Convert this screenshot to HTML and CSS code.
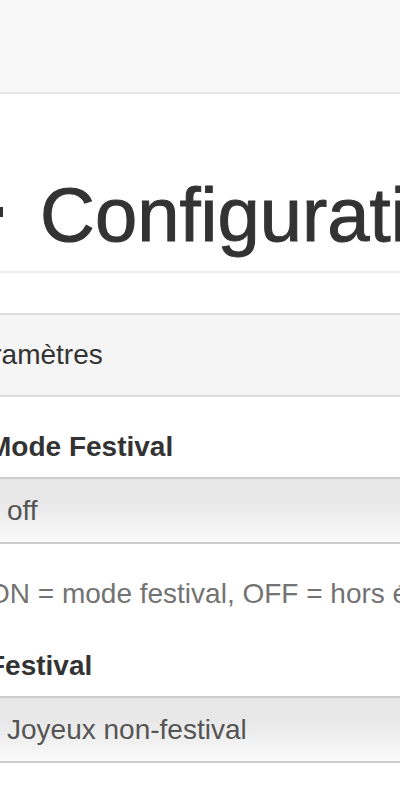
FILE: index.html
```html
<!DOCTYPE html>
<html lang="fr">
<head>
    <meta charset="UTF-8">
    <meta name="viewport" content="width=device-width, initial-scale=1.0">
    <title>Configuration</title>
    <link rel="stylesheet" href="styles.css">
</head>
<body>
    <nav class="navbar"></nav>

    <div class="container">
        <div class="page-header">
            <h1>
                <svg class="icon" viewBox="0 0 56 56" aria-hidden="true">
                    <path fill="#333" d="M23 0h10v8l5 2 6-6 7 7-6 6 2 5h9v10h-9l-2 5 6 6-7 7-6-6-5 2v8H23v-8l-5-2-6 6-7-7 6-6-2-5H0V23h9l2-5-6-6 7-7 6 6 5-2z M28 18a10 10 0 1 0 0.01 0z" fill-rule="evenodd"/>
                </svg>
                Configuration
            </h1>
        </div>

        <div class="panel">
            <div class="panel-heading">Paramètres</div>
            <div class="panel-body">
                <div class="form-group">
                    <label for="mode">Mode Festival</label>
                    <select id="mode" name="mode">
                        <option>off</option>
                        <option>on</option>
                    </select>
                    <p class="help-block">ON = mode festival, OFF = hors événement</p>
                </div>

                <div class="form-group">
                    <label for="festival">Festival</label>
                    <select id="festival" name="festival">
                        <option>Joyeux non-festival</option>
                    </select>
                </div>
            </div>
        </div>
    </div>
</body>
</html>
```

FILE: styles.css
```css
body {
    margin: 0;
    font-family: "Liberation Sans", Arial, sans-serif;
    font-size: 28px;
    line-height: 40px;
    color: #333;
    overflow: hidden;
}
.navbar {
    height: 92px;
    background-color: #f8f8f8;
    border-bottom: 2px solid #e7e7e7;
}
.container {
    width: 1100px;
    margin-left: -12px;
}
.page-header {
    margin-top: 81px;
    padding-bottom: 16px;
    border-bottom: 2px solid #eee;
}
.page-header h1 {
    display: flex;
    align-items: center;
    gap: 37px;
    margin: 0 0 0 -41px;
    font-size: 76px;
    font-weight: normal;
    line-height: 80px;
    white-space: nowrap;
    -webkit-text-stroke: 1px #333;
}
.icon {
    flex: none;
    width: 56px;
    height: 56px;
    margin-top: -4px;
}
.panel {
    margin: 40px 0 0 -48px;
    border-top: 2px solid #ddd;
}
.panel-heading {
    padding: 20px 18px;
    background-color: #f5f5f5;
    border-bottom: 2px solid #ddd;
}
.panel-body {
    padding: 30px 0 0 48px;
}
.form-group + .form-group {
    margin-top: 32px;
}
label {
    display: block;
    margin-bottom: 10px;
    font-weight: bold;
}
select {
    display: block;
    width: 100%;
    height: 67px;
    padding: 0 17px;
    box-sizing: border-box;
    border: 2px solid #ccc;
    border-radius: 0;
    background: linear-gradient(#e6e6e6 0%, #e9e9e9 40%, #fafafa 100%);
    font: inherit;
    color: #555;
    -webkit-appearance: none;
    appearance: none;
}
.help-block {
    margin: 30px 0 0;
    color: #737373;
    white-space: nowrap;
}
```
